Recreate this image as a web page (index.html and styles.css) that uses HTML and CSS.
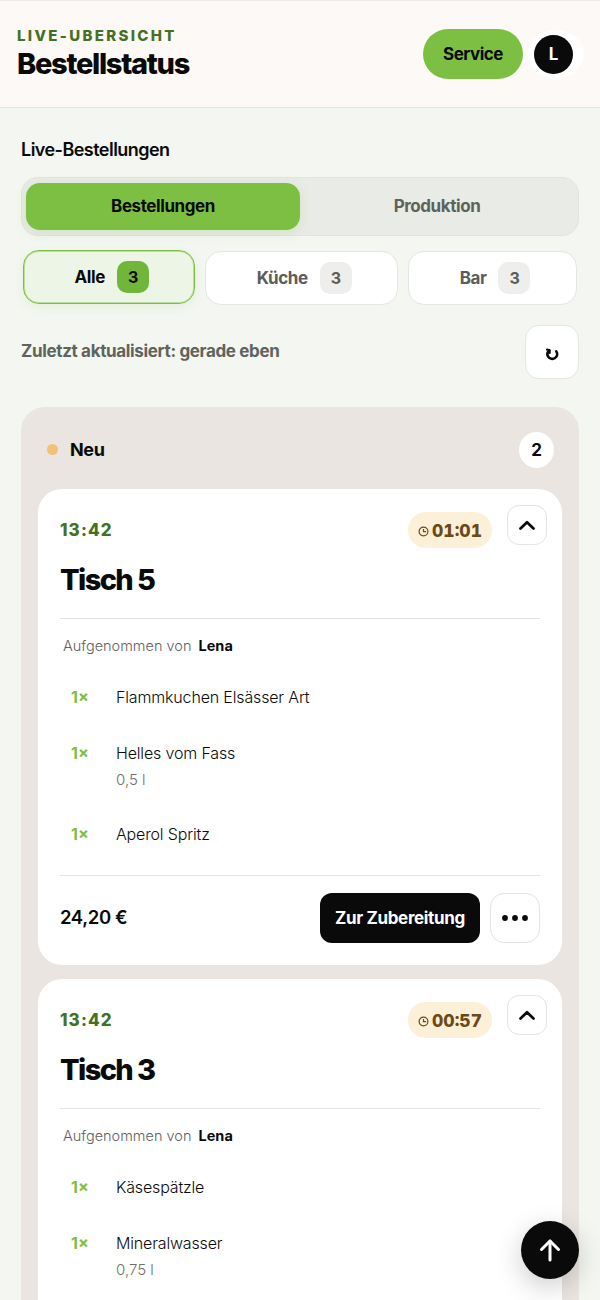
FILE: index.html
```html
<!DOCTYPE html>
<html lang="de">
<head>
<meta charset="utf-8">
<title>Bestellstatus</title>
<link rel="stylesheet" href="styles.css">
</head>
<body>
<header class="topbar">
  <div class="brand">
    <div class="eyebrow">LIVE-UBERSICHT</div>
    <h1 class="page-title">Bestellstatus</h1>
  </div>
  <div class="top-actions">
    <button class="service">Service</button>
    <div class="avatar-ring"><div class="avatar">L</div></div>
  </div>
</header>
<main class="content">
  <h2 class="live-title">Live-Bestellungen</h2>
  <div class="tabs">
    <button class="tab tab-active">Bestellungen</button>
    <button class="tab">Produktion</button>
  </div>
  <div class="filters">
    <button class="filter filter-active"><span>Alle</span><span class="count">3</span></button>
    <button class="filter"><span>Küche</span><span class="count">3</span></button>
    <button class="filter"><span>Bar</span><span class="count">3</span></button>
  </div>
  <div class="update-row">
    <span class="updated">Zuletzt aktualisiert: gerade eben</span>
    <button class="refresh" aria-label="Aktualisieren">
      <svg width="13" height="14" viewBox="0 0 13 14" fill="none" stroke="#0a0a0a" stroke-width="2.6" stroke-linecap="round" stroke-linejoin="round"><path d="M3.4 3.4C1.4 5 1 7.6 2.2 9.6c1.3 2.2 4.6 3 6.9 1.4 2.2-1.500 2.600-4.400 1.200-6.600"/><path d="M.9 2.6l2.6.7.2 2.6" stroke-width="2.1"/></svg>
    </button>
  </div>
  <section class="column">
    <div class="column-head">
      <span class="dot"></span>
      <span class="column-name">Neu</span>
      <span class="column-count">2</span>
    </div>
    <article class="card">
      <div class="card-top">
        <span class="time">13:42</span>
        <span class="timer">
          <svg class="clock" width="11" height="11" viewBox="0 0 11 11" fill="none" stroke="#6b4a17" stroke-width="1.2"><circle cx="5.5" cy="5.5" r="4.4"/><path d="M5.5 3v2.6h2.6"/></svg>
          01:01
        </span>
        <button class="collapse" aria-label="Einklappen"><svg width="16" height="10" viewBox="0 0 16 10" fill="none" stroke="#0a0a0a" stroke-width="2.7" stroke-linecap="round" stroke-linejoin="round"><path d="M1.500 8.500L8 2.200l6.500 6.300"/></svg></button>
      </div>
      <h3 class="table">Tisch 5</h3>
      <p class="taken">Aufgenommen von <strong>Lena</strong></p>
      <ul class="items">
        <li class="item"><span class="qty">1×</span><div><div class="item-name">Flammkuchen Elsässer Art</div></div></li>
        <li class="item"><span class="qty">1×</span><div><div class="item-name">Helles vom Fass</div><div class="item-note">0,5 l</div></div></li>
        <li class="item"><span class="qty">1×</span><div><div class="item-name">Aperol Spritz</div></div></li>
      </ul>
      <div class="card-foot">
        <span class="price">24,20 €</span>
        <button class="advance">Zur Zubereitung</button>
        <button class="more" aria-label="Mehr"><svg width="26" height="6" viewBox="0 0 26 6" fill="#0a0a0a"><circle cx="3" cy="3" r="2.9"/><circle cx="13" cy="3" r="2.9"/><circle cx="23" cy="3" r="2.9"/></svg></button>
      </div>
    </article>
    <article class="card">
      <div class="card-top">
        <span class="time">13:42</span>
        <span class="timer">
          <svg class="clock" width="11" height="11" viewBox="0 0 11 11" fill="none" stroke="#6b4a17" stroke-width="1.2"><circle cx="5.5" cy="5.5" r="4.4"/><path d="M5.5 3v2.6h2.6"/></svg>
          00:57
        </span>
        <button class="collapse" aria-label="Einklappen"><svg width="16" height="10" viewBox="0 0 16 10" fill="none" stroke="#0a0a0a" stroke-width="2.7" stroke-linecap="round" stroke-linejoin="round"><path d="M1.500 8.500L8 2.200l6.500 6.300"/></svg></button>
      </div>
      <h3 class="table">Tisch 3</h3>
      <p class="taken">Aufgenommen von <strong>Lena</strong></p>
      <ul class="items">
        <li class="item"><span class="qty">1×</span><div><div class="item-name">Käsespätzle</div></div></li>
        <li class="item"><span class="qty">1×</span><div><div class="item-name">Mineralwasser</div><div class="item-note">0,75 l</div></div></li>
      </ul>
    </article>
  </section>
</main>
<button class="to-top" aria-label="Nach oben"><svg width="22" height="24" viewBox="0 0 22 24" fill="none" stroke="#fff" stroke-width="3" stroke-linecap="round" stroke-linejoin="round"><path d="M11 22V3"/><path d="M2.5 11.5L11 3l8.500 8.500"/></svg></button>
</body>
</html>
```

FILE: styles.css
```css
* { box-sizing: border-box; }
html, body { margin: 0; height: 1300px; overflow: hidden; }
body {
  background: #f3f6f1;
  color: #0a0a0a;
  font-family: "Inter", "Liberation Sans", sans-serif;
}
button { font-family: inherit; cursor: pointer; padding: 0; }
h1, h2, h3, p, ul { margin: 0; padding: 0; }
ul { list-style: none; }

.topbar {
  height: 108px;
  background: #fdf9f6;
  border-bottom: 1px solid #e0e3de;
  border-top: 1px solid #ebebe8;
  padding: 26px 16px 0 17px;
  display: flex;
  justify-content: space-between;
  align-items: flex-start;
}
.eyebrow {
  font-size: 15px;
  line-height: 18px;
  font-weight: 800;
  letter-spacing: 0.155em;
  color: #44711f;
}
.page-title {
  font-size: 29px;
  line-height: 34px;
  font-weight: 800;
  letter-spacing: -0.045em;
  margin-top: 2px;
}
.top-actions { display: flex; align-items: center; gap: 5px; margin-top: 2px; }
.service {
  width: 100px;
  height: 50px;
  border: 0;
  border-radius: 25px;
  background: #7cbf42;
  color: #0a0a0a;
  font-size: 17px;
  font-weight: 700;
  letter-spacing: -0.03em;
}
.avatar-ring {
  width: 56px;
  height: 48px;
  border-radius: 50%;
  background: #fff;
  display: flex;
  align-items: center;
  padding-left: 6px;
}
.avatar {
  width: 39px;
  height: 39px;
  border-radius: 50%;
  background: #0a0a0a;
  color: #fff;
  font-size: 17px;
  font-weight: 700;
  display: flex;
  align-items: center;
  justify-content: center;
}

.content { padding: 30px 21px 0; }
.live-title {
  font-size: 18px;
  line-height: 24px;
  font-weight: 600;
  letter-spacing: -0.03em;
}
.tabs {
  margin-top: 15px;
  height: 59px;
  border: 1px solid #e2e5df;
  border-radius: 17px;
  background: #e9ebe6;
  padding: 5px 4px;
  display: grid;
  grid-template-columns: 274px 1fr;
}
.tab {
  border: 0;
  border-radius: 14px;
  background: transparent;
  color: #5e625c;
  font-size: 17px;
  line-height: 20px;
  font-weight: 700;
  letter-spacing: -0.025em;
  padding-bottom: 1px;
}
.tab-active {
  background: #7cbf42;
  color: #0a0a0a;
  box-shadow: 0 3px 12px rgba(124, 191, 66, 0.18);
}
.filters {
  margin: 15px 2px 0;
  display: flex;
  gap: 10px;
}
.filter {
  flex: 1 1 auto;
  height: 54px;
  border: 1px solid #e4e6e1;
  border-radius: 16px;
  background: #fff;
  color: #5c5c5a;
  font-size: 17px;
  font-weight: 700;
  letter-spacing: -0.025em;
  display: flex;
  align-items: center;
  justify-content: center;
  gap: 12px;
  padding-left: 5px;
}
.filter-active {
  border-color: #7cbf42;
  background: #edf6e6;
  color: #0a0a0a;
  transform: translateY(-1px);
  box-shadow: inset 0 0 0 1px rgba(124, 191, 66, 0.45), 0 3px 10px rgba(124, 191, 66, 0.1);
}
.count {
  width: 32px;
  height: 32px;
  border-radius: 10px;
  background: #eeeeec;
  color: #5c5c5a;
  font-size: 16px;
  display: flex;
  align-items: center;
  justify-content: center;
}
.filter-active .count { background: #72b53b; color: #0a0a0a; }
.update-row {
  margin-top: 20px;
  display: flex;
  align-items: center;
  justify-content: space-between;
}
.updated {
  font-size: 17px;
  line-height: 22px;
  font-weight: 700;
  letter-spacing: -0.02em;
  color: #5f635d;
  margin-top: -2px;
}
.refresh {
  width: 54px;
  height: 54px;
  border: 1px solid #e4e6e1;
  border-radius: 14px;
  background: #fff;
  display: flex;
  align-items: center;
  justify-content: center;
  padding-top: 3px;
}

.column {
  margin-top: 28px;
  background: #eae5e0;
  border-radius: 24px 24px 0 0;
  padding: 0 17px 20px;
}
.column-head {
  height: 82px;
  display: flex;
  align-items: center;
  padding: 3px 8px 0 9px;
}
.dot {
  width: 11px;
  height: 11px;
  border-radius: 50%;
  background: #f0c178;
}
.column-name {
  margin-left: 12px;
  font-size: 18px;
  font-weight: 700;
  letter-spacing: -0.02em;
}
.column-count {
  margin-left: auto;
  width: 35px;
  height: 36px;
  border-radius: 50%;
  background: #fff;
  font-size: 17px;
  font-weight: 700;
  display: flex;
  align-items: center;
  justify-content: center;
}
.card {
  background: #fff;
  border-radius: 24px;
  padding: 16px 22px 22px;
  margin-bottom: 14px;
}
.card-top {
  display: flex;
  align-items: flex-start;
  height: 45px;
}
.time {
  margin-top: 14px;
  font-size: 17px;
  line-height: 22px;
  font-weight: 800;
  letter-spacing: 0.065em;
  color: #44711f;
}
.timer {
  margin-left: auto;
  margin-top: 7px;
  width: 84px;
  height: 36px;
  border-radius: 18px;
  background: #fdf0d8;
  color: #6b4a17;
  font-size: 17.5px;
  font-weight: 800;
  font-variant-numeric: tabular-nums;
  display: flex;
  align-items: center;
  justify-content: center;
  gap: 3px;
}
.clock { margin-top: 3px; }
.collapse {
  margin-left: 15px;
  margin-right: -7px;
  width: 40px;
  height: 40px;
  border: 1px solid #e4e4e2;
  border-radius: 12px;
  background: #fff;
  display: flex;
  align-items: center;
  justify-content: center;
}
.table {
  margin-top: 10px;
  height: 59px;
  font-size: 29px;
  line-height: 40px;
  font-weight: 800;
  letter-spacing: -0.055em;
  border-bottom: 1px solid #e2e2df;
}
.taken {
  margin: 17px 0 0 3px;
  font-size: 14.5px;
  line-height: 20px;
  color: #62625f;
  font-weight: 300;
}
.taken strong { margin-left: 3px; color: #0a0a0a; font-weight: 700; }
.items { margin-top: 26px; }
.item {
  display: grid;
  grid-template-columns: 56px 1fr;
  margin-bottom: 26px;
}
.qty {
  padding-left: 11px;
  color: #7cbf42;
  font-size: 16px;
  line-height: 30px;
  font-weight: 700;
}
.item-name { font-size: 16px; line-height: 30px; font-weight: 300; letter-spacing: -0.01em; }
.item-note { font-size: 15px; line-height: 24px; padding-bottom: 1px; color: #70706d; font-weight: 300; }
.card-foot {
  border-top: 1px solid #e2e2df;
  padding-top: 17px;
  display: flex;
  align-items: center;
}
.price { font-size: 18.5px; font-weight: 600; letter-spacing: -0.02em; margin: -2px auto 0 0; }
.advance {
  width: 160px;
  height: 50px;
  border: 0;
  border-radius: 12px;
  background: #0a0a0a;
  color: #fff;
  font-size: 17px;
  font-weight: 700;
  letter-spacing: -0.02em;
}
.more {
  margin-left: 10px;
  width: 50px;
  height: 50px;
  border: 1px solid #e4e4e2;
  border-radius: 14px;
  background: #fff;
  display: flex;
  align-items: center;
  justify-content: center;
}
.to-top {
  position: fixed;
  right: 21px;
  bottom: 21px;
  width: 58px;
  height: 58px;
  border: 0;
  border-radius: 50%;
  background: #0a0a0a;
  box-shadow: 0 8px 28px rgba(0, 0, 0, 0.2);
  display: flex;
  align-items: center;
  justify-content: center;
}
```
